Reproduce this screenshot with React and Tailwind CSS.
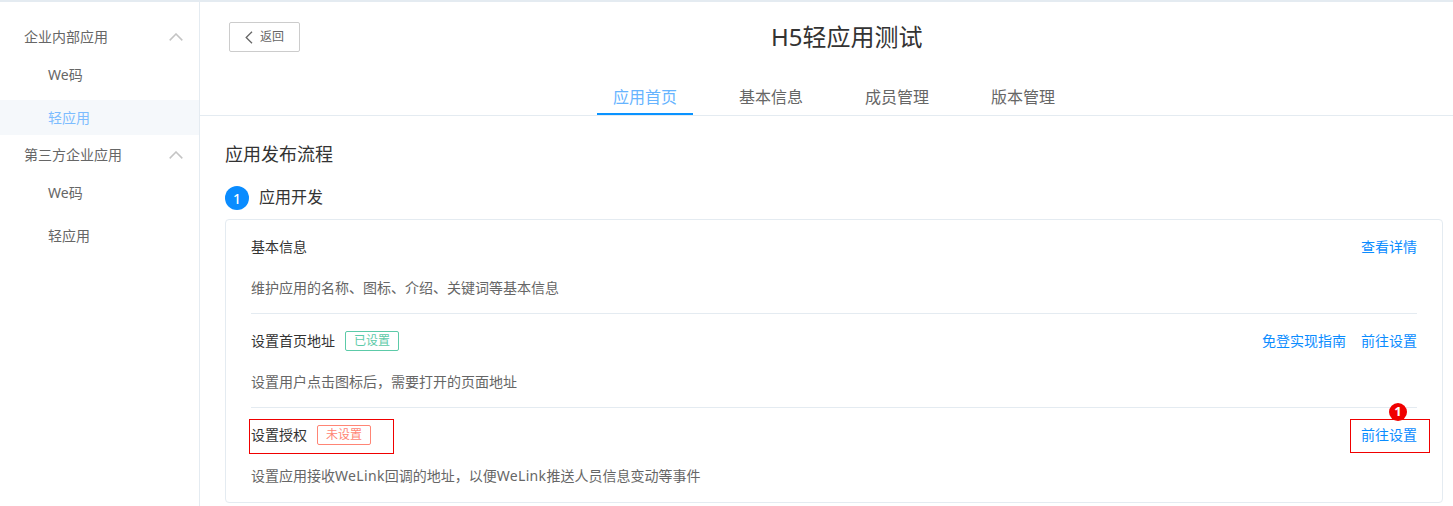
import React from "react";

const Chevron = () => (
  <svg width="14" height="8" viewBox="0 0 14 8" fill="none" stroke="#c4c4c4" strokeWidth="1.5"><path d="M0.7 7.4 L7 1 L13.3 7.4" /></svg>
);

function Group({ title, items, active, className = "" }) {
  return (
    <div className={className}>
      <div className="h-[38px] pl-6 pr-[16px] flex items-center justify-between text-[14px] text-[#666]">
        <span className="mb-[2px]">{title}</span>
        <Chevron />
      </div>
      {items.map((it, i) => (
        <div key={it} className={`h-[35px] pl-12 flex items-center text-[14px] ${i === 0 ? "mt-[2px] pb-[2px]" : "mt-[7px]"} ${it === active ? "bg-[#f5f8fb] text-[#7cbcff]" : "text-[#666]"}`}>
          {it}
        </div>
      ))}
    </div>
  );
}

function Row({ title, tag, tagClass, desc, links, divider, markTitle, markLink }) {
  const head = (
    <>
      <span className="mb-[2px]">{title}</span>
      {tag && <span className={`ml-[10px] h-[20px] w-[54px] border rounded-[2px] flex items-center justify-center text-[12px] ${tagClass}`}>{tag}</span>}
    </>
  );
  return (
    <div className={`h-[94px] pt-[13px] relative ${divider ? "border-b border-[#e4ebf1]" : ""}`}>
      <div className="h-[28px] flex items-center justify-between">
        {markTitle ? (
          <div className="w-[145px] h-[35px] -ml-[2px] mt-[3px] p-[1px] bg-[#f00000]">
            <div className="h-full pl-[1px] pb-[3px] bg-white flex items-center text-[14px] text-[#333]">{head}</div>
          </div>
        ) : (
          <div className="flex items-center text-[14px] text-[#333]">{head}</div>
        )}
        <div className="mb-[2px] flex items-center gap-[15px] text-[14px] text-[#0a8cff]">
          {links.map((l) => <span key={l}>{l}</span>)}
        </div>
      </div>
      <div className="mt-[13px] text-[14px] leading-[28px] text-[#666]">{desc}</div>
      {markLink && (
        <>
          <div className="absolute right-[-13px] top-[11px] w-[80px] h-[34px] border border-[#f00000]" />
          <div className="absolute right-[10px] top-[-5px] w-[18px] h-[18px] rounded-full bg-[#f00000] text-white text-[13px] font-bold flex items-center justify-center">1</div>
        </>
      )}
    </div>
  );
}

const WeLink = () => <span className="tracking-[0.33px]">WeLink</span>;

export default function App() {
  return (
    <div className="w-[1453px] h-[506px] overflow-hidden bg-white border-t-2 border-[#e4ebf1] flex font-['Noto_Sans','Noto_Sans_CJK_SC',sans-serif]">
      <aside className="w-[200px] shrink-0 border-r border-[#e4ebf1] pt-[16px]">
        <Group title="企业内部应用" items={["We码", "轻应用"]} active="轻应用" />
        <Group className="mt-[1px]" title="第三方企业应用" items={["We码", "轻应用"]} />
      </aside>
      <main className="flex-1 min-w-0">
        <header className="h-[114px] border-b border-[#e4ebf1] flex flex-col">
          <div className="pl-[29px] pt-[16px] flex items-start">
            <button className="mt-[4px] w-[71px] h-[30px] border border-[#ccc] rounded-[2px] flex items-center pl-[15px] gap-[7px] text-[12px] text-[#666]">
              <svg width="8" height="13" viewBox="0 0 8 13" fill="none" stroke="#666" strokeWidth="1.3"><path d="M7 0.8 L1.2 6.5 L7 12.2" /></svg>
              返回
            </button>
            <h1 className="ml-[471px] text-[24px] leading-[38px] text-[#333] font-normal">H5轻应用测试</h1>
          </div>
          <nav className="mt-auto ml-[397px] flex gap-[30px] text-[16px] text-[#666]">
            <span className="w-[96px] h-[38px] pt-[4px] flex items-center justify-center border-b-2 border-[#0a93ff] text-[#66b4ff]">应用首页</span>
            <span className="w-[96px] h-[38px] pt-[4px] pb-[2px] flex items-center justify-center">基本信息</span>
            <span className="w-[96px] h-[38px] pt-[4px] pb-[2px] flex items-center justify-center">成员管理</span>
            <span className="w-[96px] h-[38px] pt-[4px] pb-[2px] flex items-center justify-center">版本管理</span>
          </nav>
        </header>
        <section className="pl-[25px] pr-[10px]">
          <h2 className="mt-[23px] text-[18px] leading-[30px] text-[#333] font-normal">应用发布流程</h2>
          <div className="mt-[17px] flex items-center h-[24px]">
            <span className="w-[24px] h-[24px] rounded-full bg-[#0a8cff] text-white text-[14px] font-medium flex items-center justify-center">1</span>
            <span className="ml-[10px] mb-[2px] text-[16px] text-[#333]">应用开发</span>
          </div>
          <div className="mt-[9px] border border-[#e4ebf1] rounded-[4px] px-[25px] h-[284px]">
            <Row title="基本信息" desc="维护应用的名称、图标、介绍、关键词等基本信息" links={["查看详情"]} divider />
            <Row title="设置首页地址" tag="已设置" tagClass="border-[#5ccaa8] text-[#5ccaa8]" desc="设置用户点击图标后，需要打开的页面地址" links={["免登实现指南", "前往设置"]} divider />
            <Row title="设置授权" tag="未设置" tagClass="border-[#ff8575] text-[#ff8575]" desc={<>设置应用接收<WeLink />回调的地址，以便<WeLink />推送人员信息变动等事件</>} links={["前往设置"]} markTitle markLink />
          </div>
        </section>
      </main>
    </div>
  );
}
